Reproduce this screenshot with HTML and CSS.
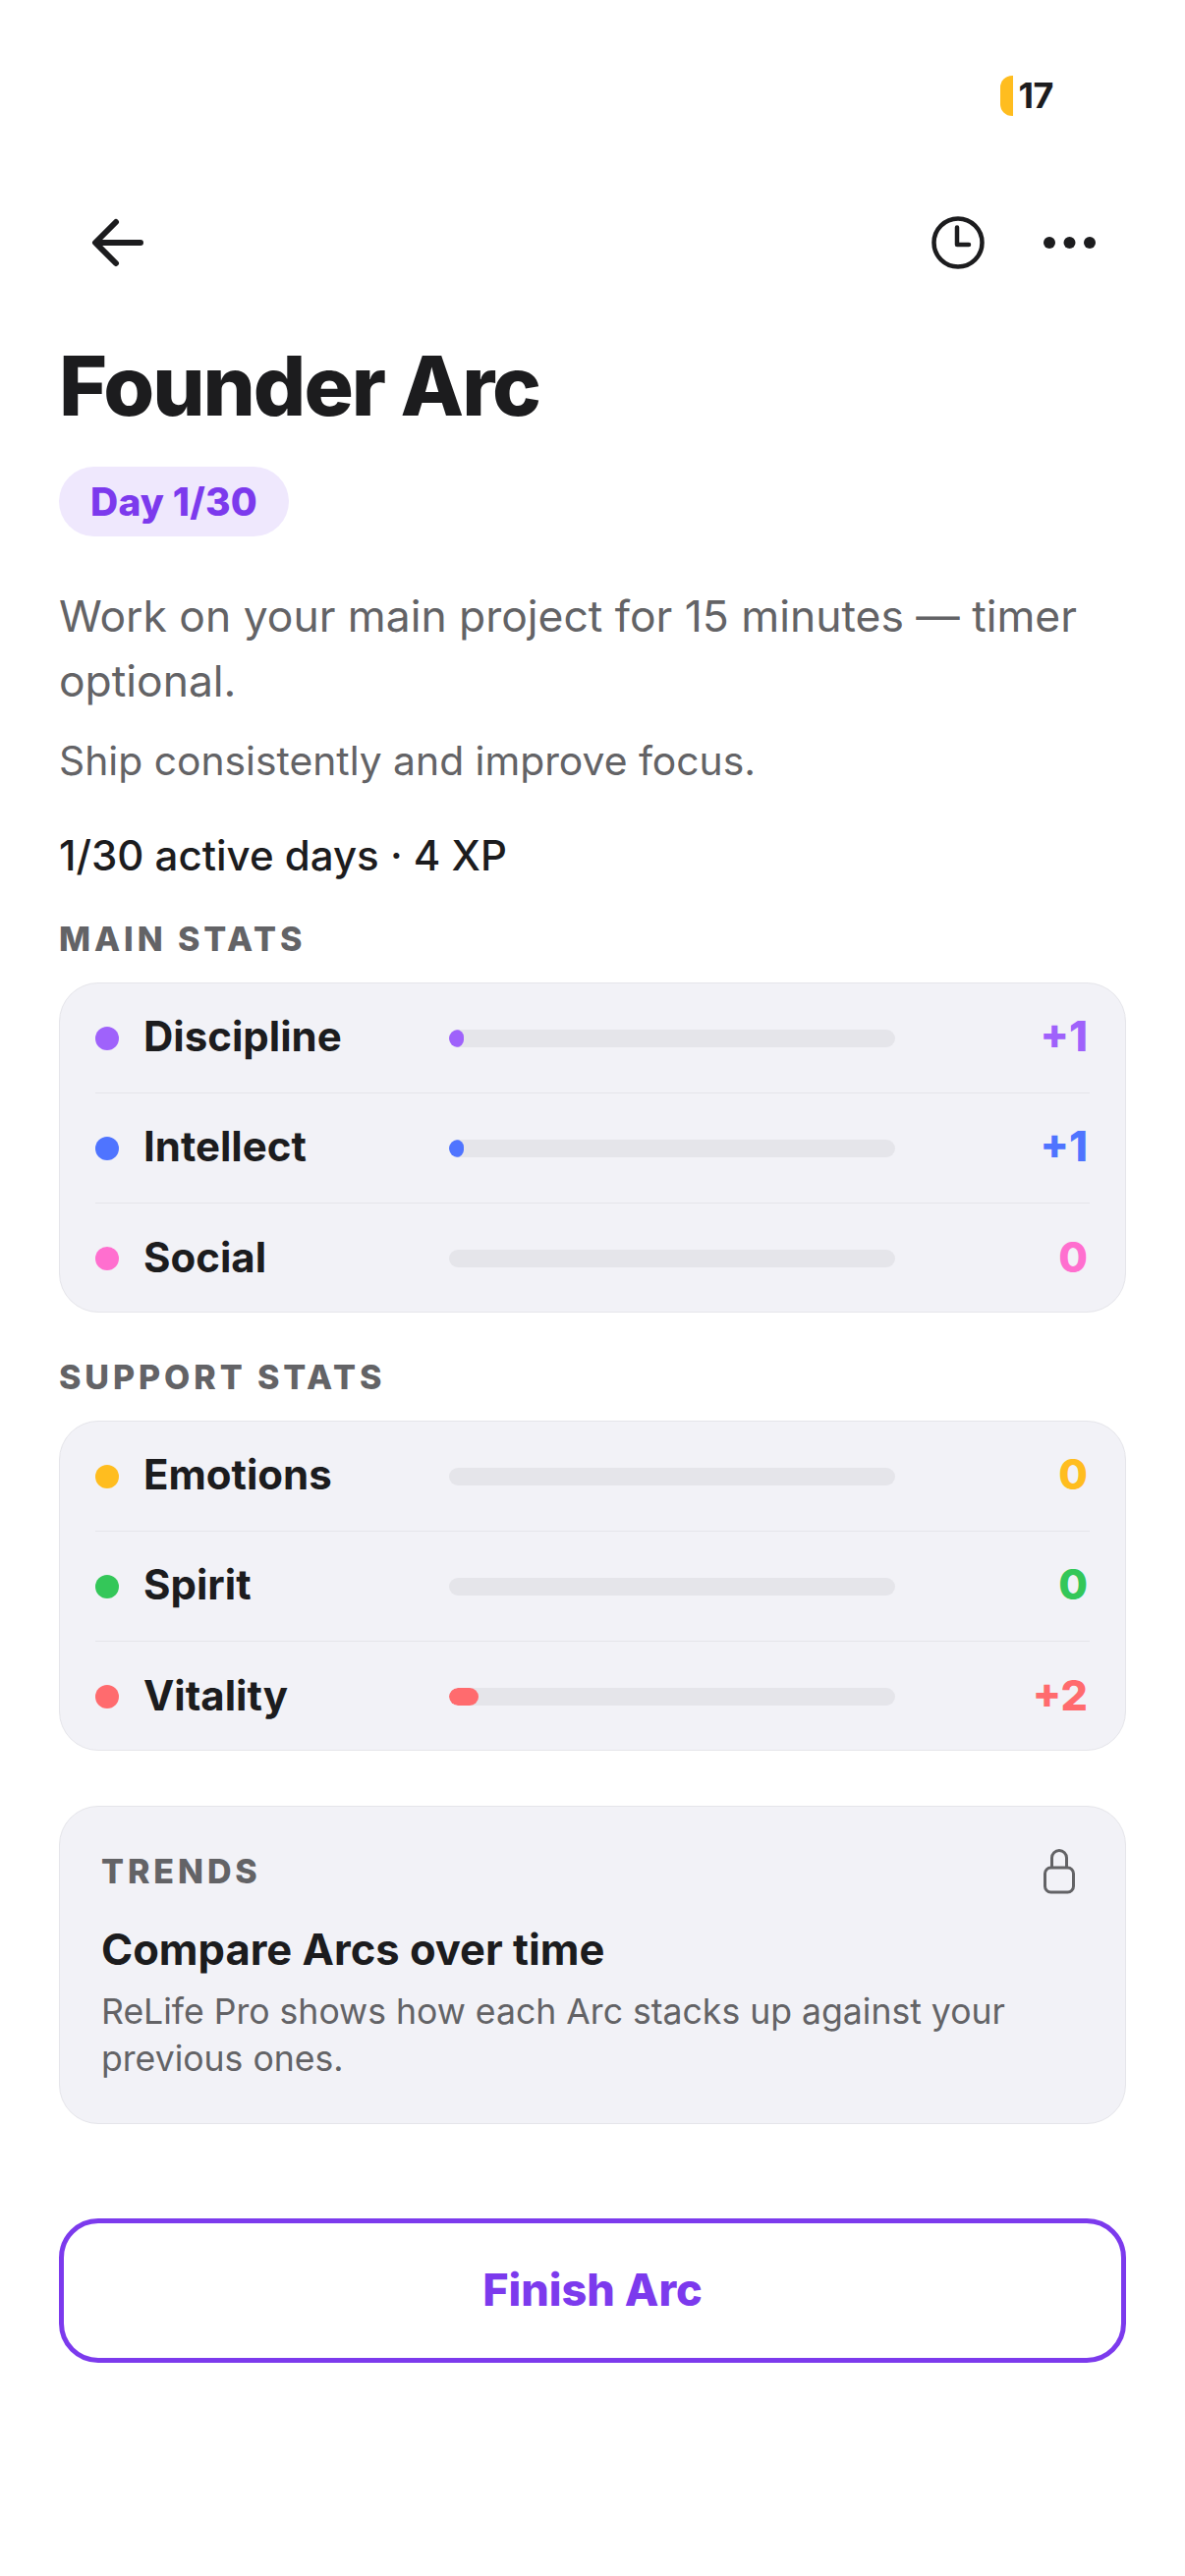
FILE: index.html
```html
<!DOCTYPE html>
<html lang="en">
<head>
<meta charset="utf-8">
<title>Founder Arc</title>
<link rel="stylesheet" href="styles.css">
</head>
<body>
<div class="screen">
  <div class="status">
    <span class="battery"></span>
    <span class="battery-num">17</span>
  </div>
  <nav class="nav">
    <svg class="ic-back" width="60" height="60" viewBox="0 0 60 60" fill="none" stroke="#1c1c1e" stroke-width="6" stroke-linecap="round" stroke-linejoin="round"><path d="M53 30H8M28 9L7 30l21 21"/></svg>
    <div class="nav-right">
      <svg class="ic-clock" width="56" height="56" viewBox="0 0 56 56" fill="none" stroke="#1c1c1e" stroke-width="4.5" stroke-linecap="round" stroke-linejoin="round"><circle cx="28" cy="28" r="24.5"/><path d="M27 12.5V30H39"/></svg>
      <svg class="ic-more" width="56" height="14" viewBox="0 0 56 14" fill="#1c1c1e"><circle cx="7" cy="7" r="6"/><circle cx="27.5" cy="7" r="6"/><circle cx="48" cy="7" r="6"/></svg>
    </div>
  </nav>
  <h1 class="title">Founder Arc</h1>
  <div class="pill">Day 1/30</div>
  <p class="desc">Work on your main project for 15 minutes — timer optional.</p>
  <p class="sub">Ship consistently and improve focus.</p>
  <p class="meta">1/30 active days · 4 XP</p>

  <h2 class="label">MAIN STATS</h2>
  <section class="card">
    <div class="row">
      <span class="dot c-purple"></span><span class="name">Discipline</span>
      <span class="bar"><span class="fill c-purple fill-s"></span></span>
      <span class="val t-purple">+1</span>
    </div>
    <div class="row">
      <span class="dot c-blue"></span><span class="name">Intellect</span>
      <span class="bar"><span class="fill c-blue fill-s"></span></span>
      <span class="val t-blue">+1</span>
    </div>
    <div class="row">
      <span class="dot c-pink"></span><span class="name">Social</span>
      <span class="bar"></span>
      <span class="val t-pink">0</span>
    </div>
  </section>

  <h2 class="label label-support">SUPPORT STATS</h2>
  <section class="card">
    <div class="row">
      <span class="dot c-yellow"></span><span class="name">Emotions</span>
      <span class="bar"></span>
      <span class="val t-yellow">0</span>
    </div>
    <div class="row">
      <span class="dot c-green"></span><span class="name">Spirit</span>
      <span class="bar"></span>
      <span class="val t-green">0</span>
    </div>
    <div class="row">
      <span class="dot c-red"></span><span class="name">Vitality</span>
      <span class="bar"><span class="fill c-red fill-l"></span></span>
      <span class="val t-red">+2</span>
    </div>
  </section>

  <section class="trends">
    <div class="trends-head">
      <span class="trends-label">TRENDS</span>
      <svg class="ic-lock" width="36" height="48" viewBox="0 0 36 48" fill="none" stroke="#636366" stroke-width="3" stroke-linejoin="round"><rect x="3.5" y="20" width="29" height="25" rx="6"/><path d="M10.5 20V10a7.5 7.5 0 0 1 15 0v10"/></svg>
    </div>
    <h3 class="trends-title">Compare Arcs over time</h3>
    <p class="trends-text">ReLife Pro shows how each Arc stacks up against your previous ones.</p>
  </section>

  <button class="finish">Finish Arc</button>
</div>
</body>
</html>
```
FILE: styles.css
```css
* { box-sizing: border-box; }
html, body { margin: 0; padding: 0; background: #fff; }
body { font-family: Inter, "Liberation Sans", sans-serif; color: #1c1c1e; }
.screen { width: 1206px; height: 2622px; padding: 77px 60px 0; overflow: hidden; }

.status { display: flex; align-items: center; justify-content: flex-end; height: 41px; padding-right: 134px; gap: 6px; margin-right: -60px; }
.battery { width: 13px; height: 41px; background: #ffbd1f; border-radius: 12px 0 0 12px; }
.battery-num { font-size: 36px; font-weight: 700; line-height: 41px; letter-spacing: -0.5px; }

.nav { display: flex; align-items: center; justify-content: space-between; height: 60px; margin-top: 99px; padding-left: 30px; padding-right: 29px; }
.ic-back, .ic-clock, .ic-more { display: block; }
.nav-right { display: flex; align-items: center; gap: 58px; }

.title { margin: 68px 0 0; font-size: 84px; line-height: 96px; font-weight: 800; letter-spacing: -2px; }
.pill { display: inline-block; margin-top: 34px; height: 71px; line-height: 71px; padding: 0 32px; border-radius: 36px; background: #efe8fd; color: #7c3aed; font-size: 39px; font-weight: 800; letter-spacing: 0.2px; }
.desc { margin: 48px 0 0; font-size: 44.4px; line-height: 66px; color: #636366; }
.sub { margin: 18px 0 0; font-size: 40.8px; line-height: 60px; color: #636366; }
.meta { margin: 37px 0 0; font-size: 42px; line-height: 60px; font-weight: 550; }

.label { margin: 34px 0 0; font-size: 34px; line-height: 42px; font-weight: 800; letter-spacing: 3.9px; color: #636366; }
.label-support { margin-top: 45px; }

.card { height: 336px; margin-top: 23px; background: #f2f2f7; border: 1px solid #e5e5ea; border-radius: 40px; padding: 0 36px; }
.row { display: flex; align-items: center; height: 112px; }
.row:not(:last-child) { border-bottom: 1px solid #e5e5ea; }
.dot { flex: none; width: 24px; height: 24px; border-radius: 50%; }
.name { flex: none; width: 311px; margin-left: 25px; padding-bottom: 3px; font-size: 42px; font-weight: 700; line-height: 50px; }
.bar { flex: none; display: block; width: 454px; height: 18px; border-radius: 9px; background: #e5e5ea; overflow: hidden; }
.fill { display: block; height: 18px; border-radius: 9px; }
.fill-s { width: 15px; }
.fill-l { width: 30px; }
.val { flex: 1; text-align: right; padding-right: 2px; padding-bottom: 5px; font-size: 43px; font-weight: 800; line-height: 50px; }

.c-purple { background: #9f62fb; } .t-purple { color: #9f62fb; }
.c-blue { background: #4f74ff; } .t-blue { color: #4f74ff; }
.c-pink { background: #ff6fcf; } .t-pink { color: #ff6fcf; }
.c-yellow { background: #ffbd1f; } .t-yellow { color: #ffbd1f; }
.c-green { background: #34c759; } .t-green { color: #34c759; }
.c-red { background: #ff6b6e; } .t-red { color: #ff6b6e; }

.trends { margin-top: 56px; height: 324px; background: #f2f2f7; border: 1px solid #e5e5ea; border-radius: 40px; padding: 45px 49px 0 42px; }
.trends-head { display: flex; align-items: center; justify-content: space-between; height: 42px; }
.trends-label { font-size: 34px; font-weight: 800; letter-spacing: 3.9px; color: #636366; line-height: 42px; }
.trends-title { margin: 33px 0 0; font-size: 43.5px; line-height: 50px; font-weight: 700; }
.trends-text { margin: 15px 0 0; font-size: 35.6px; line-height: 48px; color: #636366; }

.finish { display: block; width: 100%; height: 147px; margin-top: 96px; padding-bottom: 4px; background: #fff; border: 5px solid #7c3aed; border-radius: 40px; color: #7c3aed; font-family: inherit; font-size: 45px; font-weight: 800; }
```
